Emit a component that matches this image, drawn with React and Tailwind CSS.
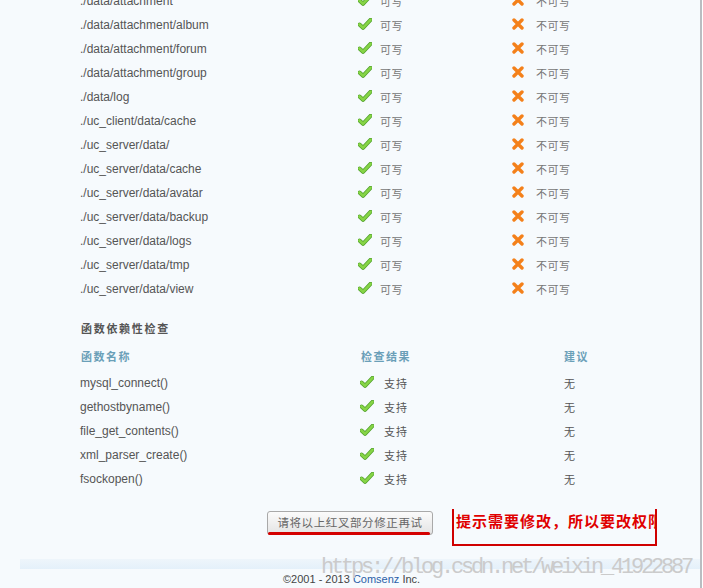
import React from 'react';

const dirs = [
  './data/attachment',
  './data/attachment/album',
  './data/attachment/forum',
  './data/attachment/group',
  './data/log',
  './uc_client/data/cache',
  './uc_server/data/',
  './uc_server/data/cache',
  './uc_server/data/avatar',
  './uc_server/data/backup',
  './uc_server/data/logs',
  './uc_server/data/tmp',
  './uc_server/data/view',
];

const funcs = [
  'mysql_connect()',
  'gethostbyname()',
  'file_get_contents()',
  'xml_parser_create()',
  'fsockopen()',
];

const latin = { fontFamily: '"Liberation Sans", Arial, sans-serif' };
const cjk = { fontFamily: '"Noto Sans CJK SC", sans-serif' };

const CheckIcon = () => (
  <svg width="14" height="12" viewBox="0 0 14 12" className="shrink-0">
    <path d="M1.5 6.5 L5 9.8 L12.5 1.8" fill="none" stroke="#4f9f2a" strokeWidth="4" strokeLinecap="round" strokeLinejoin="round" />
    <path d="M1.5 6.5 L5 9.8 L12.5 1.8" fill="none" stroke="#86d446" strokeWidth="2.6" strokeLinecap="round" strokeLinejoin="round" />
  </svg>
);

const CrossIcon = () => (
  <svg width="12" height="12" viewBox="0 0 12 12" className="shrink-0">
    <path d="M2 2 L10 10 M10 2 L2 10" stroke="#f4801a" strokeWidth="3.4" strokeLinecap="round" />
  </svg>
);

export default function App() {
  return (
    <div className="relative h-[588px] w-[703px] overflow-hidden bg-[#f6fafd]">
      <div className="flex h-full">
        <div className="flex w-[700px] flex-col">
          {/* directory permission rows */}
          <div className="-mt-[11px] flex flex-col">
            {dirs.map((d) => (
              <div key={d} className="grid h-[24px] grid-cols-[278px_154px_1fr] items-center pl-[80px]">
                <span className="text-[12px] text-[#555]" style={latin}>{d}</span>
                <span className="flex items-center gap-[8px] -translate-y-[1px]">
                  <CheckIcon />
                  <span className="text-[11px] tracking-[0.5px] text-[#777] translate-y-[1px]" style={cjk}>可写</span>
                </span>
                <span className="flex items-center gap-[12px] -translate-y-[1px]">
                  <CrossIcon />
                  <span className="text-[11px] tracking-[0.5px] text-[#777] translate-y-[1px]" style={cjk}>不可写</span>
                </span>
              </div>
            ))}
          </div>

          {/* function check */}
          <div className="mt-[19px] flex h-[16px] items-center pl-[81px]">
            <span className="text-[11px] font-bold tracking-[1.7px] text-[#555]" style={cjk}>函数依赖性检查</span>
          </div>
          <div className="mt-[12px] grid h-[16px] grid-cols-[280px_203px_1fr] items-center pl-[81px]">
            <span className="text-[11px] font-bold tracking-[1.5px] text-[#6a9fb8]" style={cjk}>函数名称</span>
            <span className="text-[11px] font-bold tracking-[1.5px] text-[#6a9fb8]" style={cjk}>检查结果</span>
            <span className="text-[11px] font-bold tracking-[1.5px] text-[#6a9fb8]" style={cjk}>建议</span>
          </div>
          <div className="mt-[7px] flex flex-col">
            {funcs.map((f) => (
              <div key={f} className="grid h-[24px] grid-cols-[280px_204px_1fr] items-center pl-[80px]">
                <span className="text-[12px] text-[#555]" style={latin}>{f}</span>
                <span className="flex items-center gap-[10px] -translate-y-[1px]">
                  <CheckIcon />
                  <span className="text-[11px] tracking-[1px] text-[#555] translate-y-[1px]" style={cjk}>支持</span>
                </span>
                <span className="text-[11px] text-[#555]" style={cjk}>无</span>
              </div>
            ))}
          </div>

          {/* button + annotation */}
          <div className="mt-[20px] flex items-start pl-[267px]">
            <div className="relative">
              <button
                type="button"
                className="flex h-[24px] w-[166px] items-center justify-center rounded-[3px] border border-[#a9a9a9] bg-gradient-to-b from-[#fbfbfb] to-[#e4e4e4] text-[11.5px] tracking-[0.6px] text-[#666]"
                style={cjk}
              >
                请将以上红叉部分修正再试
              </button>
              <div className="absolute left-[1px] top-[21px] h-[3px] w-[162px] rounded-full bg-[#d40000]" />
            </div>
            <div className="ml-[19px] -mt-[2px] h-[37px] w-[205px] overflow-hidden border-x-[2px] border-b-[2px] border-[#d00000]">
              <div className="whitespace-nowrap pl-[2px] pt-[1px] text-[15px] font-bold tracking-[1px] text-[#e00000]" style={{ fontFamily: '"Noto Sans CJK SC", serif' }}>
                提示需要修改，所以要改权限
              </div>
            </div>
          </div>

          {/* footer */}
          <div className="mt-[13px] ml-[20px] h-[10px] bg-gradient-to-b from-[#eef5fb] to-[#e4f0fa]" />
          <div className="mt-[2px] pl-[283px] text-[11px] text-[#444]" style={latin}>
            ©2001 - 2013 <span className="text-[#2a5ea8]">Comsenz</span> Inc.
          </div>
        </div>
        <div className="w-[2px] bg-[#b9bdc1]" />
        <div className="w-[1px] bg-white" />
      </div>

      {/* watermark */}
      <div
        className="pointer-events-none absolute left-[321px] top-[551px] whitespace-nowrap text-[22px] tracking-[-3.2px] text-[#cbcbcb]"
        style={{ fontFamily: '"Liberation Mono", monospace' }}
      >
        https://blog.csdn.net/weixin_41922887
      </div>
    </div>
  );
}
